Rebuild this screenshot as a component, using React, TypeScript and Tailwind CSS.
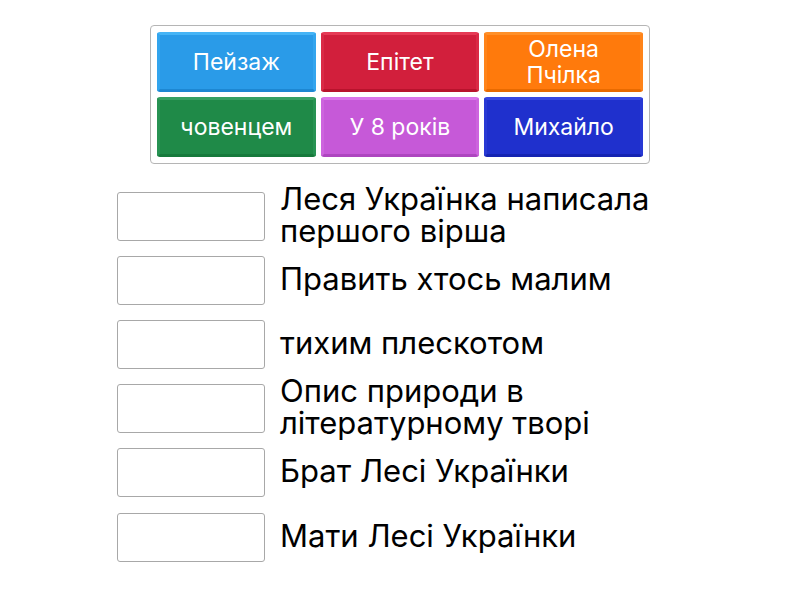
import React from "react"

const tiles = [
  { label: "Пейзаж", cls: "bg-[#2a9be8] border-t-[#45b4f6] border-x-[#33a5ee] border-b-[#1d87d2]" },
  { label: "Епітет", cls: "bg-[#d21f3c] border-t-[#e63a55] border-x-[#da2a46] border-b-[#b8132c]" },
  { label: "Олена Пчілка", cls: "bg-[#ff7a0c] border-t-[#ff9029] border-x-[#ff841a] border-b-[#e86a00]" },
  { label: "човенцем", cls: "bg-[#1f8a48] border-t-[#36a062] border-x-[#279353] border-b-[#177a3c]" },
  { label: "У 8 років", cls: "bg-[#c659d8] border-t-[#da75ea] border-x-[#cd64de] border-b-[#ae46c0]" },
  { label: "Михайло", cls: "bg-[#1f30cd] border-t-[#3647e0] border-x-[#2839d4] border-b-[#1524b2]" },
]

const rows = [
  "Леся Українка написала першого вірша",
  "Править хтось малим",
  "тихим плескотом",
  "Опис природи в літературному творі",
  "Брат Лесі Українки",
  "Мати Лесі Українки",
]

export default function App() {
  return (
    <div className="w-[800px] h-[600px] bg-white font-[Inter] pt-[25px]">
      {/* tile bank */}
      <div className="mx-auto w-[500px] border border-[#b5b5b5] rounded-[4px] p-[6px]">
        <div className="grid grid-cols-3 gap-[5px]">
          {tiles.map((t) => (
            <div
              key={t.label}
              className={`h-[60px] rounded-[3px] border-[3px] flex items-center justify-center text-center text-white text-[23px] leading-[26px] px-6 ${t.cls}`}
            >
              {t.label}
            </div>
          ))}
        </div>
      </div>

      {/* answer rows */}
      <div className="ml-[117px] mt-[20px] flex flex-col">
        {rows.map((r) => (
          <div key={r} className="h-[64.2px] flex items-center">
            <div className="w-[148px] h-[49px] border border-[#a8a8a8] rounded-[3px] bg-white shrink-0" />
            <div className="ml-[15px] w-[400px] text-[31px] leading-[32px] text-black -mt-[3px]">{r}</div>
          </div>
        ))}
      </div>
    </div>
  )
}
